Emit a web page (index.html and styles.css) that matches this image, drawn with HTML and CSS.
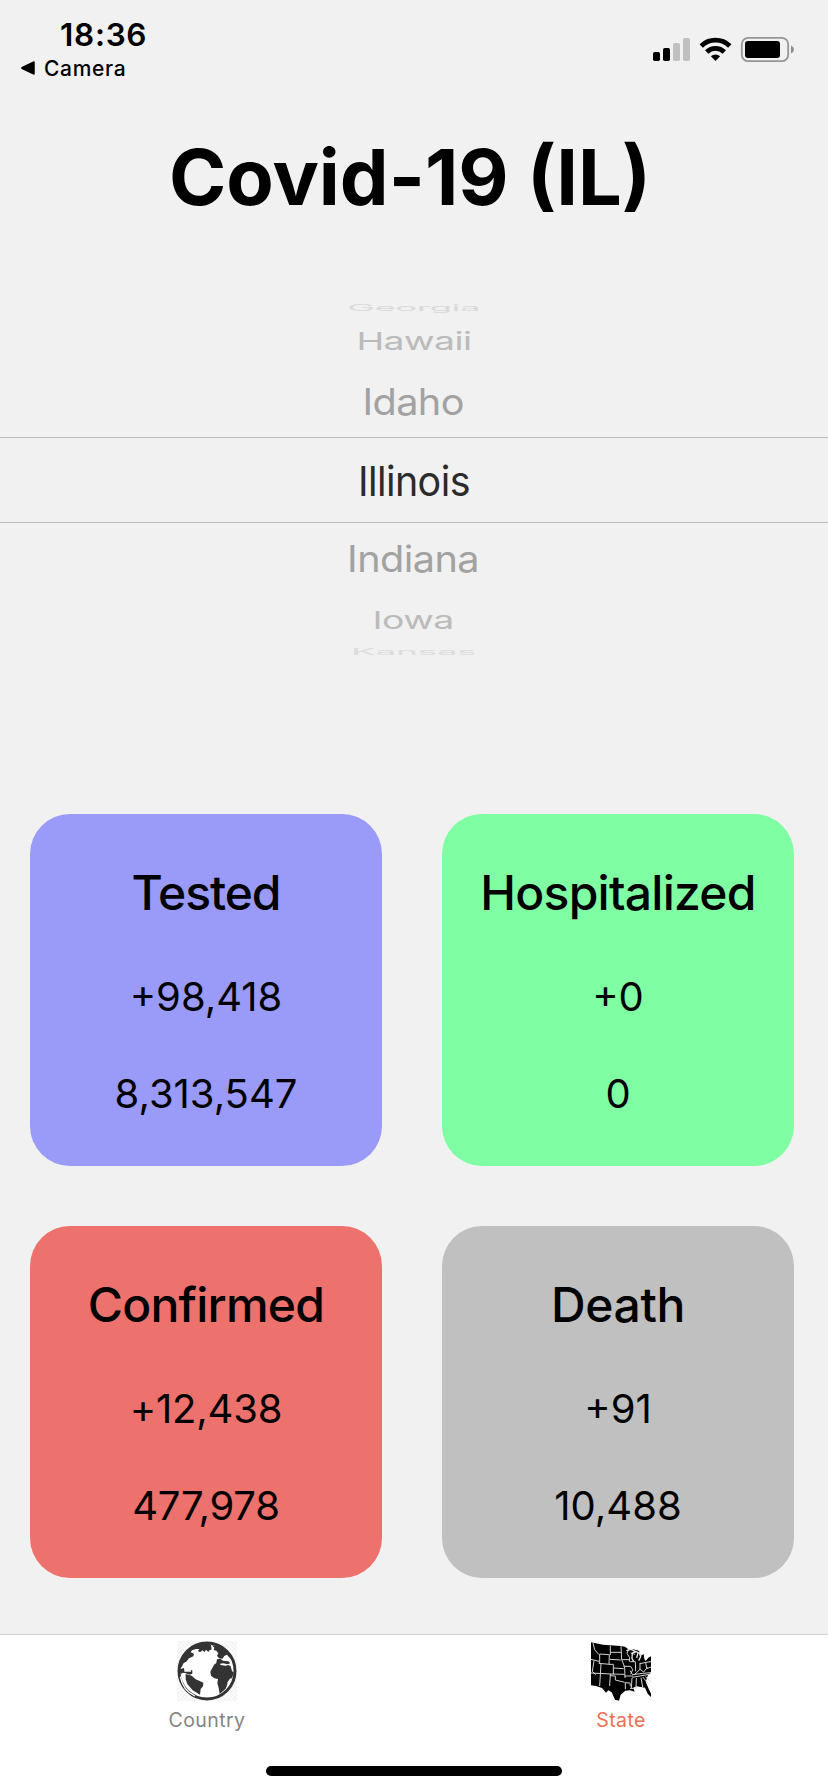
FILE: index.html
```html
<!DOCTYPE html>
<html lang="en">
<head>
<meta charset="utf-8">
<title>Covid-19 (IL)</title>
<link rel="stylesheet" href="styles.css">
</head>
<body>
<div class="screen">
  <header class="status">
    <div class="status-left">
      <div class="time">18:36</div>
      <div class="back">
        <svg class="back-arrow" viewBox="0 0 14 14"><path d="M13 1v12L1 7.2V6.8z" fill="#000" stroke="#000" stroke-width="1.5" stroke-linejoin="round"/></svg>
        <span>Camera</span>
      </div>
    </div>
    <svg class="status-icons" viewBox="0 0 200 60">
      <rect x="25" y="32" width="7" height="9" rx="1.8"/>
      <rect x="35" y="28" width="7" height="13" rx="1.8"/>
      <rect x="45" y="23" width="7" height="18" rx="1.8" fill="#c0c0c0"/>
      <rect x="55" y="18" width="7" height="23" rx="1.8" fill="#c0c0c0"/>
      <g fill="none" stroke="#000" stroke-width="4.8">
        <path d="M73.2 26a20.5 20.5 0 0 1 28.6 0"/>
        <path d="M78.7 32a12.6 12.6 0 0 1 17.6 0"/>
      </g>
      <path d="M87.5 41l-4.6-4.700a6.600 6.600 0 0 1 9.200 0z"/>
      <rect x="113.8" y="17.8" width="46.4" height="23.400" rx="6.500" fill="none" stroke="#969696" stroke-width="1.800"/>
      <rect x="117" y="21" width="35" height="17" rx="3"/>
      <path d="M163 25.500q3 1.400 3 4t-3 4z" fill="#8c8c8c"/>
    </svg>
  </header>

  <h1 class="title">Covid-19 (IL)</h1>

  <div class="picker">
    <div class="row far-top"><span class="georgia">Georgia</span></div>
    <div class="row mid"><span class="hawaii">Hawaii</span></div>
    <div class="row near-top"><span class="idaho">Idaho</span></div>
    <div class="row selected"><span class="illinois">Illinois</span></div>
    <div class="row near-bottom"><span class="indiana">Indiana</span></div>
    <div class="row mid"><span class="iowa">Iowa</span></div>
    <div class="row far-bottom"><span class="kansas">Kansas</span></div>
  </div>

  <main class="cards">
    <section class="card tested"><h2>Tested</h2><p>+98,418</p><p>8,313,547</p></section>
    <section class="card hospitalized"><h2>Hospitalized</h2><p>+0</p><p>0</p></section>
    <section class="card confirmed"><h2>Confirmed</h2><p>+12,438</p><p>477,978</p></section>
    <section class="card death"><h2>Death</h2><p>+91</p><p>10,488</p></section>
  </main>

  <nav class="tabs">
    <div class="tab">
      <svg class="tab-icon" viewBox="82 63 180 180">
        <defs><pattern id="checks" width="12" height="12" patternUnits="userSpaceOnUse"><rect width="12" height="12" fill="#fdfdfd"/><path d="M0 0h6v6H0zM6 6h6v6H6z" fill="#f1f1f1"/></pattern></defs>
        <rect x="82" y="63" width="180" height="180" fill="url(#checks)"/>
        <circle cx="172" cy="153" r="84" fill="#fff" stroke="#333" stroke-width="9"/>
        <g fill="#333">
          <path d="M88 148q2-46 36-68l10-6 40-6 10 8 2 12-8 4-2 4-7-7-5 8-5-6-8 6-6-4 4-6-10 0-12 4-4 6 10 4-2 8-13 6-8 10-8 4-6 12-4 4 2 6 6 4-4 6-6-2z"/>
          <path d="M92 148l10-4 4 6 22 1 0 10-8 3-14-5-10-1z"/>
          <path d="M108 162l18 5 12 11 12 5 11 5-1 11-7 8-2 17-22-13-16-19-5-14z"/>
          <path d="M186 76l16 2 30 14 16 22-8-1-8-9-8 4-6 8-10-1-6-8 4-7-6-8-8-2 2-7z"/>
          <path d="M202 118l10-2 8 6 16 2 6 6-8 3-14-3-12 2-8-4z"/>
          <path d="M193 134l8-6 8 1 4 6 14 2 10-2 6 4 4 14 6 6-6 14-12 14-7 19-18 16-3-18-4-14 2-13-11-2-10-8-2-12z"/>
        </g>
        <path d="M104 146v9h20v-4z" fill="#fff"/>
        <path d="M92 170q8 42 44 58M243 176l-9 14" fill="none" stroke="#fff" stroke-width="4"/>
      </svg>
      <span class="tab-label">Country</span>
    </div>
    <div class="tab active">
      <svg class="tab-icon" viewBox="93 63 180 180">
        <path d="M93 67l36 7 52 4 14 2 10 8 14 0 18 4 5 16 9-6 2 15 4 6 8-10 8-4v48l-10 10-6 18 9 21 7 15v10l-10-10-8-18-12-2-14-2-9 4 4 12-14-4-14 1-14 12-5 18-12-3-10-22-10-6-7 7-12-14-18-6-22-3z"/>
        <g fill="none" stroke="#d5d5d5" stroke-width="3">
          <path d="M99 69l5 20 12 14M119 102l0 28M93 118l24 6M119 102l29 2M151 77l0 28M116 130l34 3M148 104l-1 28M151 97l33 0M150 118l32 2M148 133l12 0 0 30M123 132l-4 66M102 122l-5 32 10 10M93 159l60 3M151 162l-2 36M183 79l2 40 9 22 1 33M160 144l31 2M152 162l42 1M150 167l16 1 0 12 28 7M185 119l22 0M206 88l-5 12 8 13-1 12M190 139l22 0 6 10-6 14M194 168l26 0M196 188l14 1 1 10M196 187l0 21M212 99l13 4M211 125l15 0M226 125l1 29M210 152l8 12 30-4 25-2M217 172l56-10M240 128l0 20-18 17M240 131l18-4 15-2M257 127l3 19 13-5M239 147l12 9 11-14M216 174l-2 32M229 174l-1 33M243 173l5 28M248 171l19 22M256 170l17 16M210 205l12 0"/>
        </g>
        <path d="M199 92l14-4 14 7-10 4-1 17 5 8M222 98l8-3 4 3-4 16M237 96l5 14-6 12" fill="none" stroke="#e8e8e8" stroke-width="4"/>
      </svg>
      <span class="tab-label">State</span>
    </div>
  </nav>
  <div class="home"><div class="home-bar"></div></div>
</div>
</body>
</html>
```
FILE: styles.css
```css
* { box-sizing: border-box; }
body { margin: 0; background: #f1f1f1; font-family: Inter, "Liberation Sans", sans-serif; color: #000; }
h1, h2, p { margin: 0; }
.screen { width: 828px; height: 1792px; display: flex; flex-direction: column; overflow: hidden; }

.status { height: 120px; display: flex; justify-content: space-between; }
.status-left { padding: 15px 0 0 21px; }
.time { height: 39px; line-height: 40px; padding-left: 39px; font-size: 31.5px; font-weight: 600; letter-spacing: 0.7px; }
.back { height: 28px; display: flex; align-items: center; gap: 9px; font-size: 21px; font-weight: 500; letter-spacing: 0.7px; }
.back-arrow { width: 14px; height: 14px; }
.status-icons { width: 200px; height: 60px; margin-top: 20px; }

.title { height: 181px; padding-top: 7px; line-height: 101px; text-align: center; font-size: 77.5px; font-weight: 700; letter-spacing: 0; padding-right: 8px; }

.picker { height: 513px; display: flex; flex-direction: column; }
.row { display: flex; align-items: center; justify-content: center; font-size: 41.5px; line-height: 50px; padding-right: 1px; }
.row span { letter-spacing: -0.6px; }
.far-top { height: 13px; color: #d9d9d9; }
.mid { height: 52px; color: #bbb; }
.near-top { height: 71px; color: #a2a2a2; }
.selected { height: 86px; padding-top: 2px; color: #2b2b2b; border-top: 1px solid #bdbdbd; border-bottom: 1px solid #bdbdbd; }
.near-bottom { height: 70px; color: #a2a2a2; }
.far-bottom { height: 14px; color: #dcdcdc; }
.georgia { transform: scale(0.885, 0.22); }
.hawaii { transform: translateY(1px) scale(0.9, 0.59); }
.idaho { transform: scale(0.955, 0.89); }
.illinois { transform: scale(0.95, 1); }
.indiana { transform: translateY(1px) scale(0.955, 0.89); }
.iowa { transform: translateY(1px) scale(0.9, 0.58); }
.kansas { transform: scale(0.9, 0.2); }

.cards { height: 820px; padding: 0 34px 0 30px; display: grid; grid-template-columns: 352px 352px; grid-template-rows: 352px 352px; gap: 60px; }
.card { border-radius: 40px; padding-top: 48px; text-align: center; }
.card h2 { font-size: 48px; line-height: 61px; font-weight: 500; margin-bottom: 25px; letter-spacing: -0.75px; }
.card p { font-size: 40px; line-height: 97px; }
.tested { background: #9a9af8; }
.tested h2 { letter-spacing: -1.1px; }
.hospitalized { background: #80fea4; }
.confirmed { background: #ed716d; }
.confirmed p { letter-spacing: -0.2px; }
.death { background: #c0c0c0; }
.death h2 { letter-spacing: -0.4px; }

.tabs { height: 120px; background: #fff; border-top: 1px solid #d2d2d2; display: flex; }
.tab { flex: 1; display: flex; flex-direction: column; align-items: center; padding-top: 6px; color: #858585; }
.tab-icon { width: 60px; height: 60px; }
.tab-label { font-size: 19.5px; line-height: 24px; margin-top: 7px; letter-spacing: 0.4px; }
.active { color: #ee6e55; }
.home { flex: 1; background: #fff; display: flex; justify-content: center; padding-top: 12px; }
.home-bar { width: 296px; height: 10px; border-radius: 5px; background: #000; }
```
